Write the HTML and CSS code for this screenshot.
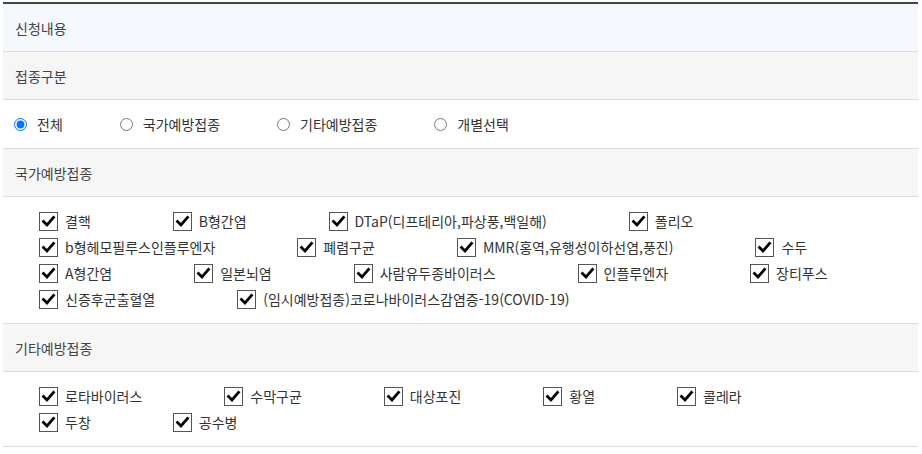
FILE: index.html
```html
<!DOCTYPE html>
<html lang="ko">
<head>
    <meta charset="UTF-8">
    <meta name="viewport" content="width=device-width, initial-scale=1.0">
    <title>신청내용</title>
    <link rel="stylesheet" href="styles.css">
</head>
<body>

<div class="apply-box">
    <div class="row-title title-main">신청내용</div>

    <div class="row-title">접종구분</div>
    <div class="radio-row">
        <label class="radio-item"><input type="radio" name="kind" checked> 전체</label>
        <label class="radio-item"><input type="radio" name="kind"> 국가예방접종</label>
        <label class="radio-item"><input type="radio" name="kind"> 기타예방접종</label>
        <label class="radio-item"><input type="radio" name="kind"> 개별선택</label>
    </div>

    <div class="row-title">국가예방접종</div>
    <div class="check-list">
        <span class="check-item"><span class="box"></span>결핵</span>
        <span class="check-item"><span class="box"></span>B형간염</span>
        <span class="check-item"><span class="box"></span>DTaP(디프테리아,파상풍,백일해)</span>
        <span class="check-item"><span class="box"></span>폴리오</span>
        <span class="check-item"><span class="box"></span>b형헤모필루스인플루엔자</span>
        <span class="check-item"><span class="box"></span>폐렴구균</span>
        <span class="check-item"><span class="box"></span>MMR(홍역,유행성이하선염,풍진)</span>
        <span class="check-item"><span class="box"></span>수두</span>
        <span class="check-item"><span class="box"></span>A형간염</span>
        <span class="check-item"><span class="box"></span>일본뇌염</span>
        <span class="check-item"><span class="box"></span>사람유두종바이러스</span>
        <span class="check-item"><span class="box"></span>인플루엔자</span>
        <span class="check-item"><span class="box"></span>장티푸스</span>
        <span class="check-item"><span class="box"></span>신증후군출혈열</span>
        <span class="check-item"><span class="box"></span>(임시예방접종)코로나바이러스감염증-19(COVID-19)</span>
    </div>

    <div class="row-title">기타예방접종</div>
    <div class="check-list">
        <span class="check-item"><span class="box"></span>로타바이러스</span>
        <span class="check-item"><span class="box"></span>수막구균</span>
        <span class="check-item"><span class="box"></span>대상포진</span>
        <span class="check-item"><span class="box"></span>황열</span>
        <span class="check-item"><span class="box"></span>콜레라</span>
        <span class="check-item"><span class="box"></span>두창</span>
        <span class="check-item"><span class="box"></span>공수병</span>
    </div>
</div>

<script>
    // 체크 표시 그리기
    document.querySelectorAll('.box').forEach(function(box) {
        box.innerHTML = '<svg width="15" height="15" viewBox="0 0 15 15"><path d="M2.5 7.5 L6 11 L12.5 3.5" fill="none" stroke="#000" stroke-width="2.8" stroke-linecap="square" stroke-linejoin="miter"/></svg>';
    });
</script>

</body>
</html>
```

FILE: styles.css
```css
body {
    margin: 0;
    font-family: "Noto Sans CJK KR", "Noto Sans", sans-serif;
    font-size: 14px;
    color: #333;
    background-color: #ffffff;
}

.apply-box {
    margin: 2px 4px 0 3px;
    border-top: 2px solid #444; /* 상단 진한 선 */
}

/* 제목 줄 */
.row-title {
    height: 47px;
    display: flex;
    align-items: center;
    padding-left: 12px;
    background-color: #f6f6f6;
    border-bottom: 1px solid #dcdcdc;
    color: #444;
}

.title-main {
    background-color: #f5f8fc; /* 연한 파란 배경 */
}

/* 라디오 줄 */
.radio-row {
    height: 48px;
    display: flex;
    align-items: center;
    padding-left: 11px;
    border-bottom: 1px solid #dcdcdc;
}

.radio-item {
    display: flex;
    align-items: center;
    gap: 10px;
    margin-right: 57px;
    color: #333;
}

.radio-item input {
    width: 13px;
    height: 13px;
    margin: 0;
    accent-color: #0075ff;
}

/* 체크박스 목록 */
.check-list {
    display: flex;
    flex-wrap: wrap;
    column-gap: 82px;
    padding: 11px 60px 11px 36px;
    border-bottom: 1px solid #dcdcdc;
}

.check-item {
    height: 26px;
    display: flex;
    align-items: center;
    gap: 7px;
    color: #333;
    white-space: nowrap;
}

.box {
    width: 17px;
    height: 17px;
    border: 1px solid #555;
    background-color: #fff;
    display: flex;
    align-items: center;
    justify-content: center;
}
```
